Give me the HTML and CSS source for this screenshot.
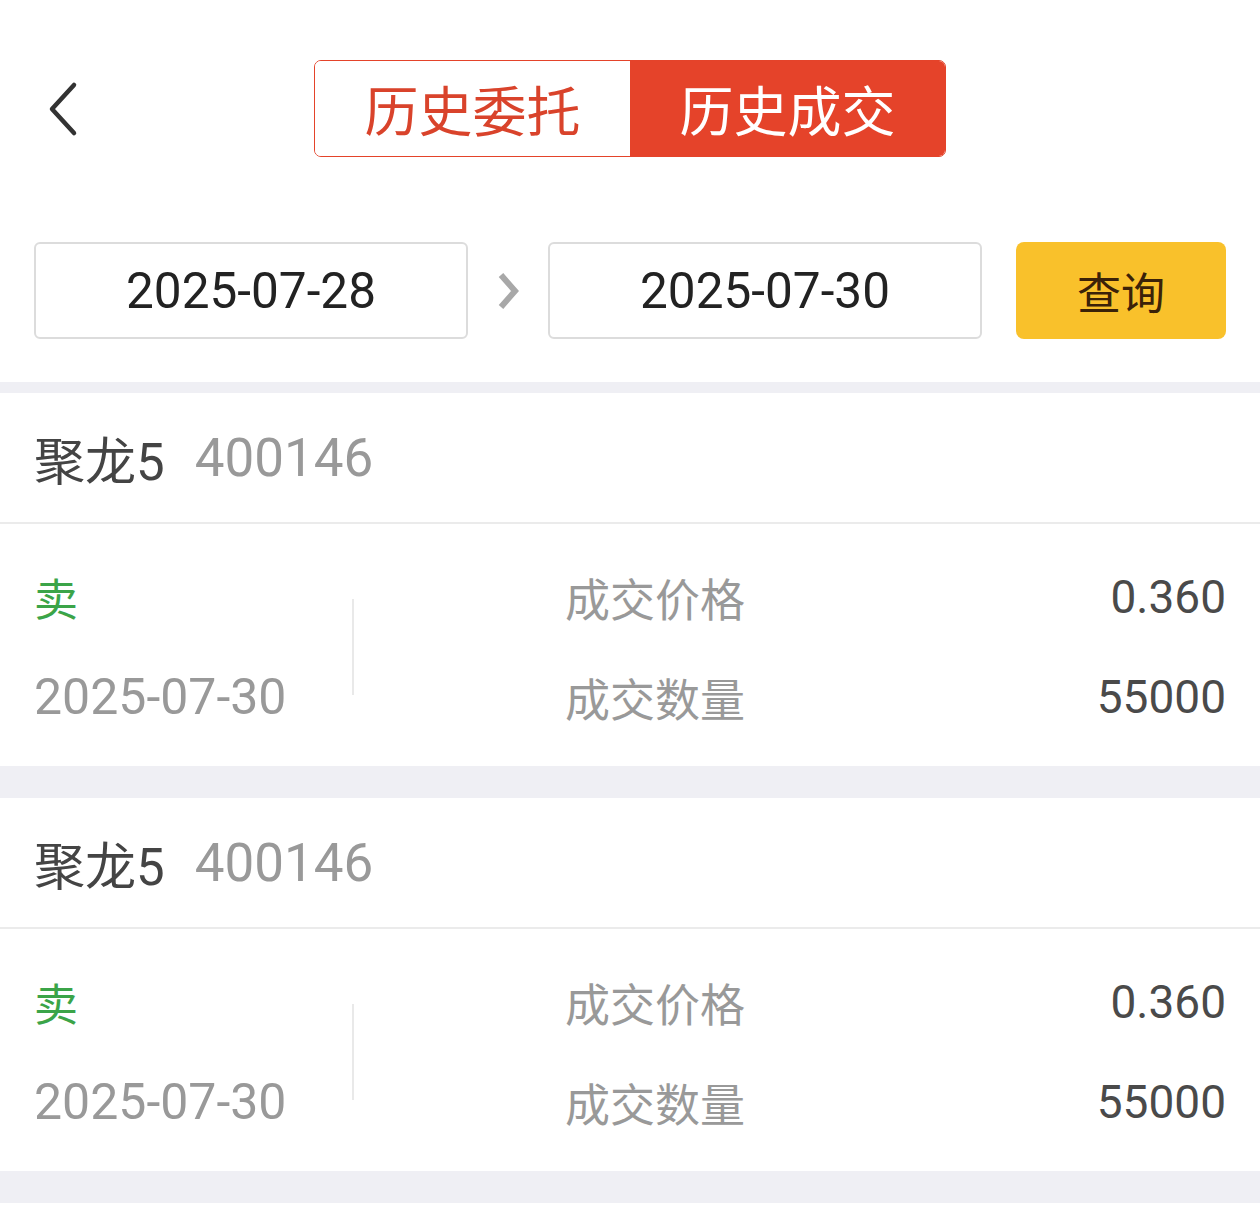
FILE: index.html
```html
<!DOCTYPE html>
<html lang="zh-CN">
<head>
<meta charset="utf-8">
<title>历史成交</title>
<link rel="stylesheet" href="styles.css">
</head>
<body>
<div class="page">
  <header class="topbar">
    <div class="back">
      <svg width="40" height="56" viewBox="0 0 40 56"><polyline points="30,4 8,28 30,52" fill="none" stroke="#333" stroke-width="4.5" stroke-linecap="round" stroke-linejoin="round"/></svg>
    </div>
    <div class="segment">
      <div class="seg seg-off">历史委托</div>
      <div class="seg seg-on">历史成交</div>
    </div>
    <div></div>
  </header>

  <section class="filter">
    <div class="date-box">2025-07-28</div>
    <div class="arrow">
      <svg width="30" height="40" viewBox="0 0 30 40"><polyline points="8,4 22,20 8,36" fill="none" stroke="#a8a8a8" stroke-width="6" stroke-linejoin="miter"/></svg>
    </div>
    <div class="date-box">2025-07-30</div>
    <div class="query-btn">查询</div>
  </section>

  <div class="sep sep-thin"></div>

  <article class="trade">
    <div class="trade-head"><span class="name">聚龙5</span><span class="code">400146</span></div>
    <div class="trade-body">
      <div class="side-col">
        <div class="row side">卖</div>
        <div class="row date">2025-07-30</div>
      </div>
      <div class="divider"></div>
      <div class="info">
        <div class="row"><span class="label">成交价格</span><span class="value">0.360</span></div>
        <div class="row"><span class="label">成交数量</span><span class="value">55000</span></div>
      </div>
    </div>
  </article>

  <div class="sep"></div>

  <article class="trade">
    <div class="trade-head"><span class="name">聚龙5</span><span class="code">400146</span></div>
    <div class="trade-body">
      <div class="side-col">
        <div class="row side">卖</div>
        <div class="row date">2025-07-30</div>
      </div>
      <div class="divider"></div>
      <div class="info">
        <div class="row"><span class="label">成交价格</span><span class="value">0.360</span></div>
        <div class="row"><span class="label">成交数量</span><span class="value">55000</span></div>
      </div>
    </div>
  </article>

  <div class="sep"></div>
</div>
</body>
</html>
```

FILE: styles.css
```css
* { box-sizing: border-box; }
html, body { margin: 0; padding: 0; background: #fff; }
body {
  font-family: Roboto, "Noto Sans CJK SC", sans-serif;
  color: #333;
}
.page { width: 1260px; }

.topbar {
  display: grid;
  grid-template-columns: 1fr auto 1fr;
  align-items: center;
  padding-top: 60px;
}
.back { padding-left: 44px; display: flex; align-items: center; }
.back svg { display: block; }

.segment {
  display: flex;
  width: 632px;
  height: 97px;
  border: 1.5px solid #e4432a;
  border-radius: 7px;
  overflow: hidden;
}
.seg {
  flex: 1;
  display: flex;
  align-items: center;
  justify-content: center;
  font-family: "Noto Sans CJK SC", sans-serif;
  font-size: 54px;
  line-height: 1;
}
.seg-off { color: #d9432b; background: #fff; }
.seg-on { color: #fff; background: #e5432a; }

.filter {
  display: flex;
  align-items: center;
  margin-top: 85px;
  padding: 0 34px;
  height: 97px;
}
.date-box {
  width: 434px;
  height: 97px;
  border: 2px solid #dcdcdc;
  border-radius: 6px;
  display: flex;
  align-items: center;
  justify-content: center;
  font-size: 49.5px;
  color: #222;
}
.arrow {
  width: 80px;
  display: flex;
  justify-content: center;
}
.arrow svg { display: block; }
.query-btn {
  margin-left: 34px;
  width: 210px;
  height: 97px;
  background: #f9c12b;
  border-radius: 8px;
  display: flex;
  align-items: center;
  justify-content: center;
  font-family: "Noto Sans CJK SC", sans-serif;
  font-size: 44px;
  color: #3b2208;
}

.sep { height: 32px; background: #efeff4; }
.sep-thin { height: 11px; margin-top: 43px; }

.trade { background: #fff; }
.trade-head {
  height: 131px;
  border-bottom: 2px solid #ebebeb;
  display: flex;
  align-items: center;
  padding-left: 34px;
  font-size: 51px;
}
.name { color: #444; }
.code { color: #999; margin-left: 30px; font-size: 53px; }

.trade-body {
  display: flex;
  align-items: center;
  padding: 23px 34px 19px;
}
.side-col { width: 318px; }
.row { height: 100px; display: flex; align-items: center; }
.side { color: #3ba448; font-size: 44px; font-family: "Noto Sans CJK SC", sans-serif; }
.date { color: #999; font-size: 50px; }
.divider { width: 2px; height: 96px; background: #e9e9e9; }
.info { flex: 1; padding-left: 211px; }
.info .row { justify-content: space-between; }
.label { color: #999; font-size: 45px; font-family: "Noto Sans CJK SC", sans-serif; }
.value { color: #4a4a4a; font-size: 46px; }
```
